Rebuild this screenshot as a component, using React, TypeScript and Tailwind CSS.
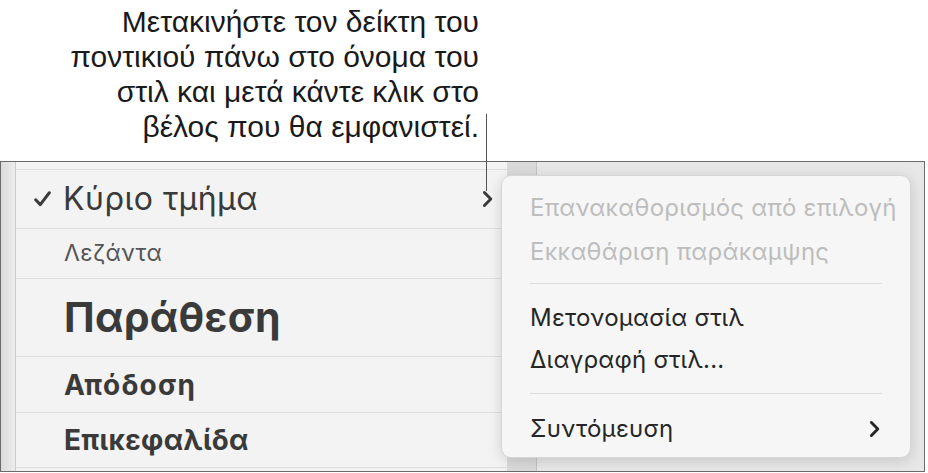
import React from "react";

const ui = { fontFamily: "Inter, 'Noto Sans', sans-serif" };
const callout = { fontFamily: "'Liberation Sans', Arial, sans-serif" };

function Chevron({ className, w = 2.6 }: { className?: string; w?: number }) {
  return (
    <svg viewBox="0 0 10 16" className={className} fill="none">
      <path d="M2.2 2 L8 8 L2.2 14" stroke="currentColor" strokeWidth={w} strokeLinecap="round" strokeLinejoin="round" />
    </svg>
  );
}

function Check() {
  return (
    <svg viewBox="0 0 16 15" className="w-[17px] h-[16px]" fill="none">
      <path d="M1.6 8.2 L5.9 12.8 L14.4 1.6" stroke="#3a3a3a" strokeWidth="2.8" strokeLinecap="round" strokeLinejoin="round" />
    </svg>
  );
}

export default function App() {
  return (
    <div className="relative w-[928px] h-[473px] bg-white overflow-hidden" style={ui}>
      {/* Callout */}
      <div className="h-[161px] flex flex-col items-end pr-[449px] pt-[4px]">
        <div className="text-right text-[30px] leading-[35px] text-[#1a1a1a]" style={callout}>
          <div>Μετακινήστε τον δείκτη του</div>
          <div>ποντικιού πάνω στο όνομα του</div>
          <div>στιλ και μετά κάντε κλικ στο</div>
          <div>βέλος που θα εμφανιστεί.</div>
        </div>
      </div>
      <div className="absolute left-[486px] top-[114px] w-px h-[77px] bg-[#555]" />

      {/* Frame */}
      <div className="w-[925px] h-[311px] border border-[#6b6b6b] flex overflow-hidden">
        <div className="w-[15px] bg-gradient-to-r from-[#dcdcdc] to-[#ececec] border-r border-[#cccccc]" />
        <div className="w-[491px] bg-[#f3f3f3] flex flex-col text-[#3a3a3a] whitespace-nowrap">
          <div className="h-[8px] border-b border-[#dddddd]" />
          <div className="h-[59px] border-b border-[#dddddd] flex items-center pl-[18px] pr-[14px]">
            <Check />
            <span className="ml-[12px] text-[32px] tracking-[0.5px]">Κύριο τμήμα</span>
            <span className="flex-1" />
            <Chevron className="w-[11px] h-[18px] text-[#3a3a3a]" />
          </div>
          <div className="h-[50px] border-b border-[#dddddd] flex items-center pl-[48px]">
            <span className="text-[23px] tracking-[0.5px] text-[#555555]">Λεζάντα</span>
          </div>
          <div className="h-[78px] border-b border-[#dddddd] flex items-center pl-[48px]">
            <span className="text-[41px] tracking-[0.3px] font-bold">Παράθεση</span>
          </div>
          <div className="h-[56px] border-b border-[#dddddd] flex items-center pl-[48px]">
            <span className="text-[28px] tracking-[1.2px] font-bold">Απόδοση</span>
          </div>
          <div className="h-[55px] border-b border-[#dddddd] flex items-center pl-[48px]">
            <span className="text-[28px] tracking-[0.3px] font-bold">Επικεφαλίδα</span>
          </div>
        </div>
        <div className="w-[30px] bg-[#dadada] border-r border-[#c4c4c4]" />
        <div className="flex-1 bg-[#e7e7e7]" />
      </div>

      {/* Popup menu */}
      <div className="absolute left-[501px] top-[175px] w-[410px] h-[283px] rounded-[10px] bg-[#f6f6f6] border border-[#d6d6d6] shadow-[0_3px_14px_rgba(0,0,0,0.14)] pl-[28px] pr-[28px] pt-[10px] text-[24px] tracking-[0.25px] whitespace-nowrap">
        <div className="h-[44px] flex items-center text-[#bdbdbd]">Επανακαθορισμός από επιλογή</div>
        <div className="h-[44px] flex items-center text-[#bdbdbd]">Εκκαθάριση παράκαμψης</div>
        <div className="mt-[9px] mb-[13px] h-px bg-[#dcdcdc]" />
        <div className="h-[42px] flex items-center text-[#262626]">Μετονομασία στιλ</div>
        <div className="h-[42px] flex items-center text-[#262626]">Διαγραφή στιλ...</div>
        <div className="mt-[12px] mb-[13px] h-px bg-[#dcdcdc]" />
        <div className="h-[44px] flex items-center text-[#262626]">
          <span className="flex-1">Συντόμευση</span>
          <Chevron className="w-[11px] h-[18px] text-[#262626] mr-[2px]" />
        </div>
      </div>
    </div>
  );
}
